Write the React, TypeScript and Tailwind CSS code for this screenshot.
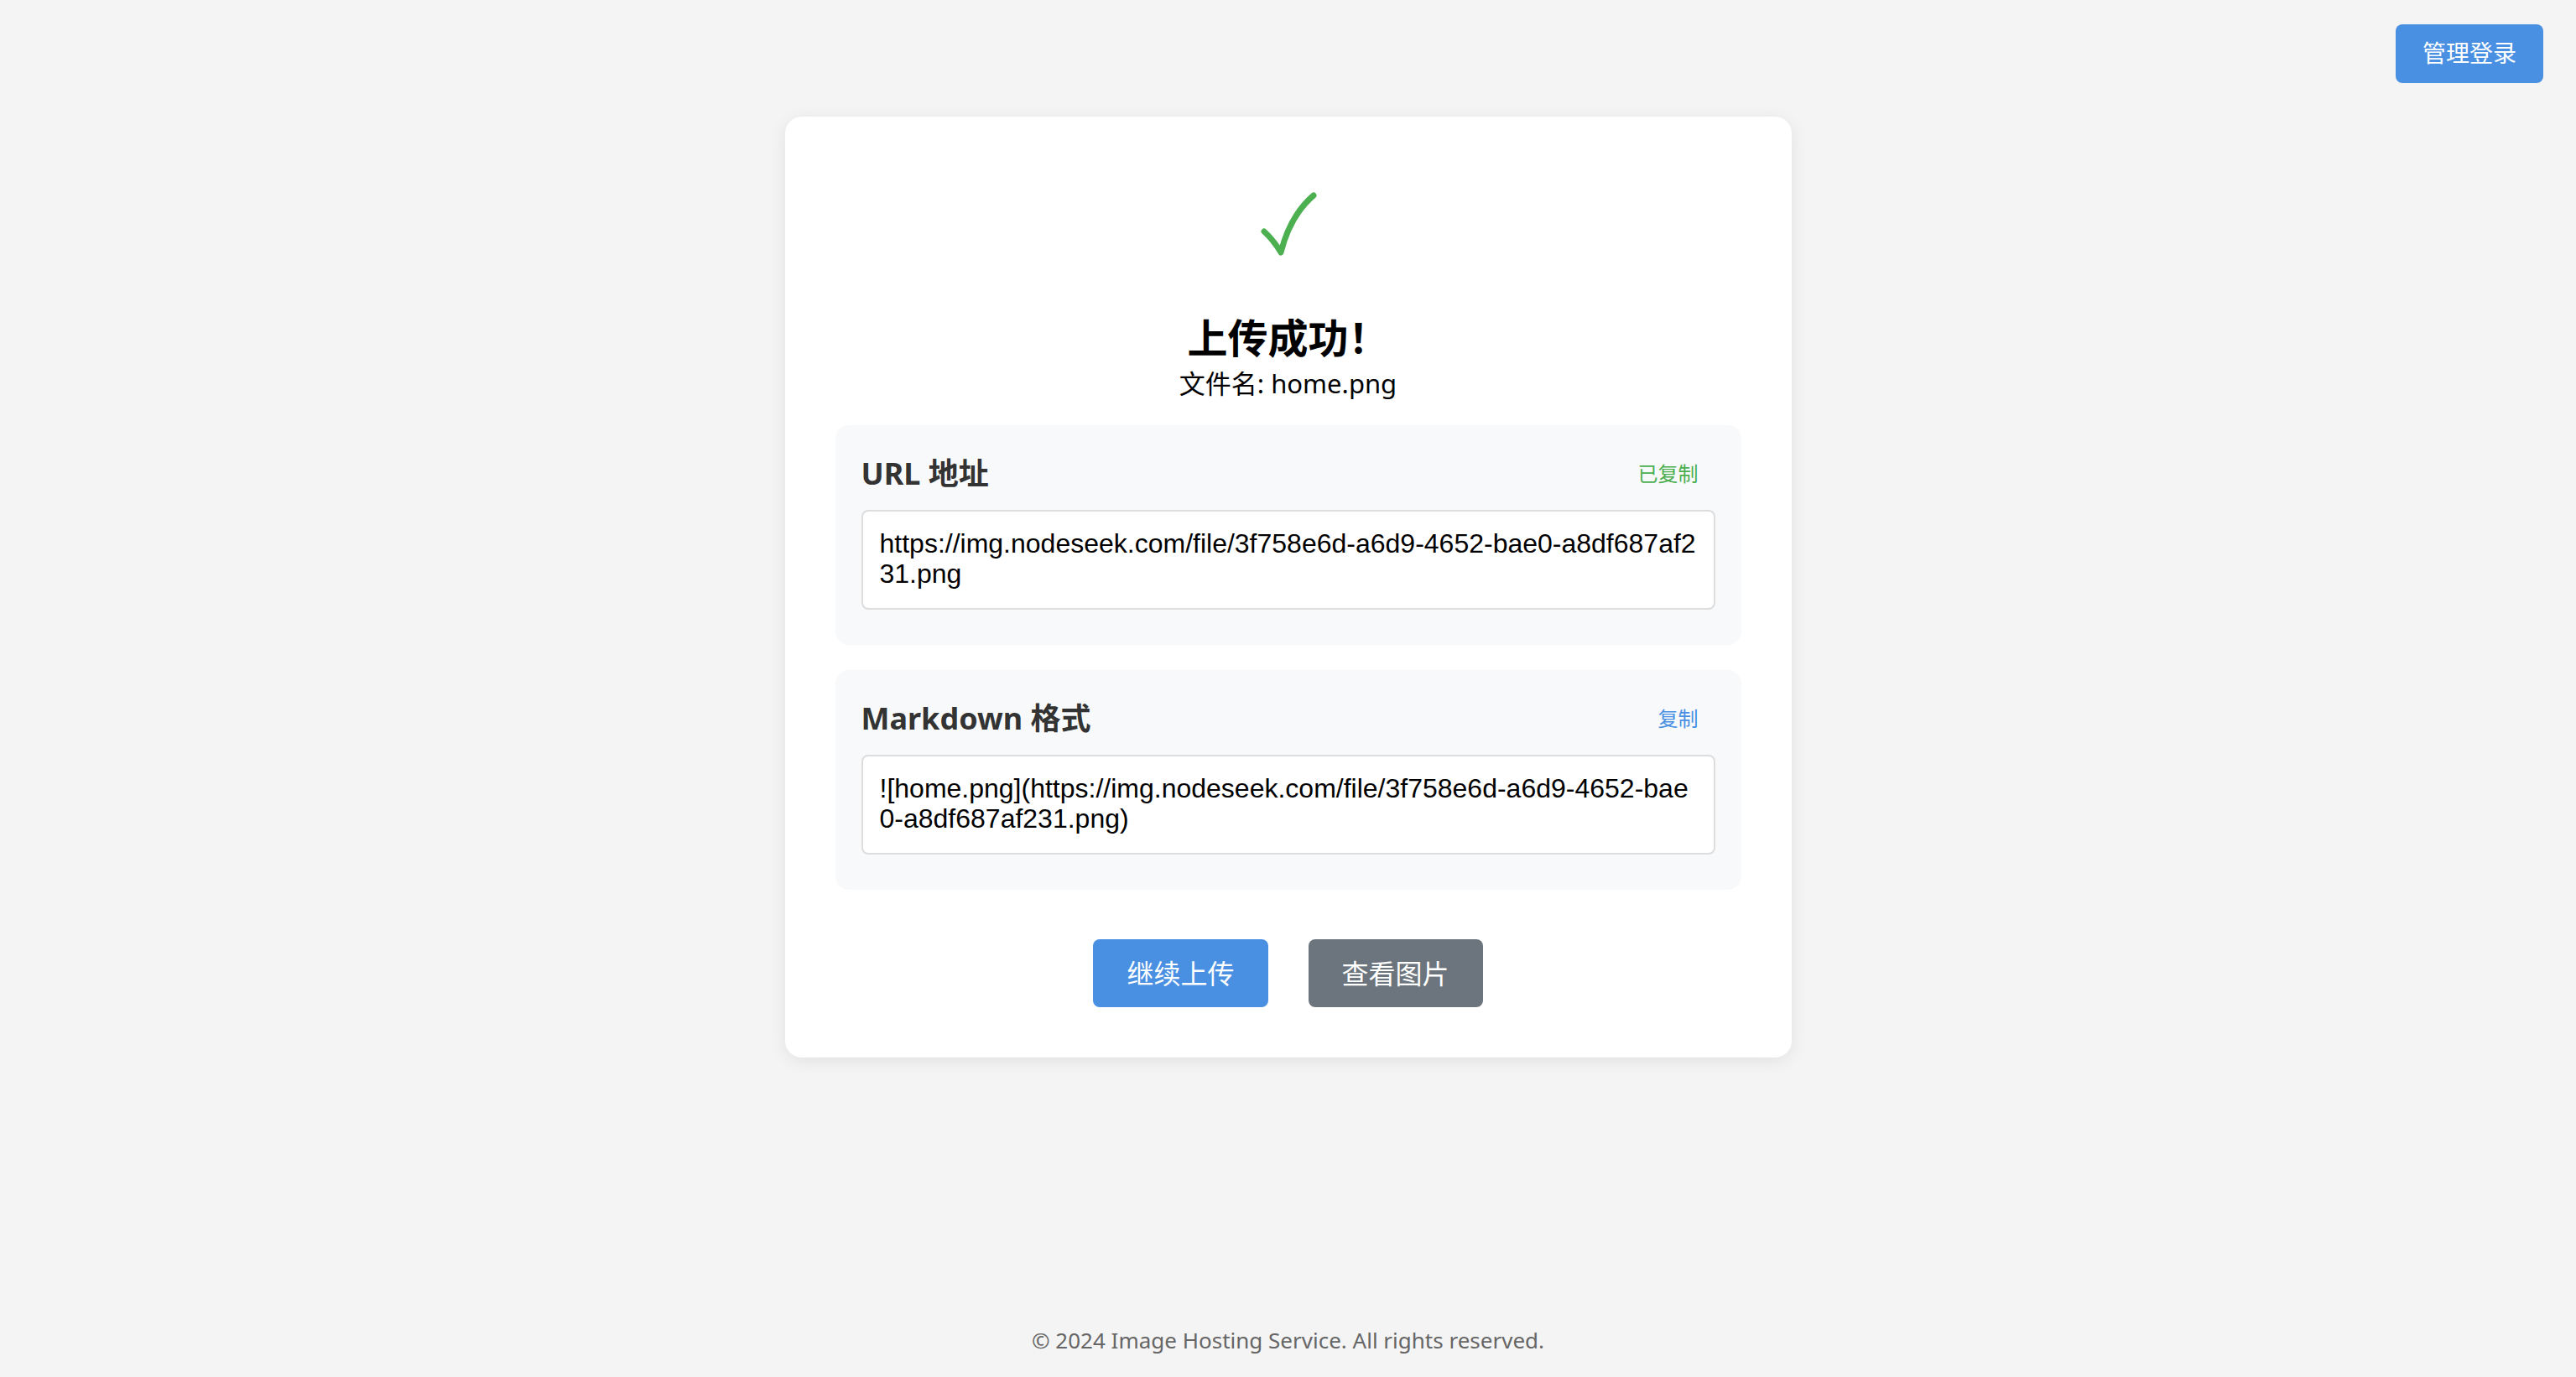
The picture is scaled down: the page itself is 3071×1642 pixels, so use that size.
import { useState } from 'react';

const fileName = 'home.png';
const fileUrl = 'https://img.nodeseek.com/file/3f758e6d-a6d9-4652-bae0-a8df687af231.png';

const CheckMark = () => (
  <svg width="72" height="80" viewBox="0 0 72 80" fill="none" className="block">
    <path
      d="M7 49 Q18 59 27 74 Q38 30 66 6"
      stroke="#4caf50"
      strokeWidth="7"
      strokeLinecap="round"
      strokeLinejoin="round"
    />
  </svg>
);

const LinkBox = ({
  label,
  value,
  copied,
  onCopy,
}: {
  label: string;
  value: string;
  copied: boolean;
  onCopy: () => void;
}) => (
  <div className="w-full bg-[#f8f9fa] rounded-[16px] px-[31px] pt-[30px] pb-[42px]">
    <div className="flex h-[56px] items-center justify-between">
      <h3 className="text-[36px] font-bold text-[#333]">{label}</h3>
      <button
        onClick={onCopy}
        className={`px-[20px] text-[24px] ${copied ? 'text-[#4caf50]' : 'text-[#4a90e2]'}`}
      >
        {copied ? '已复制' : '复制'}
      </button>
    </div>
    <textarea
      readOnly
      rows={2}
      value={value}
      className="mt-[15px] block h-[119px] w-full resize-none overflow-hidden rounded-[8px] border-2 border-[#ddd] bg-white p-[20px] text-[32px] leading-[1.15] text-black break-all outline-none font-['Liberation_Sans',Arial,sans-serif]"
    />
  </div>
);

export default function App() {
  const [copied, setCopied] = useState<'url' | 'md' | null>('url');

  return (
    <div className="flex min-h-screen flex-col bg-[#f4f4f4] font-['Noto_Sans','Noto_Sans_CJK_SC',sans-serif]">
      <header className="flex justify-end pt-[29px] pr-[39px]">
        <button className="rounded-[8px] bg-[#4a90e2] px-[32px] py-[16px] text-[28px] leading-[1.35] text-white">
          管理登录
        </button>
      </header>

      <main className="flex flex-1 justify-center pt-[40px]">
        <div className="flex h-fit w-[1200px] flex-col items-center rounded-[20px] bg-white p-[60px] shadow-[0_4px_20px_rgba(0,0,0,0.08)]">
          <div className="mt-[28px]">
            <CheckMark />
          </div>
          <h2 className="mt-[67px] text-[48px] font-bold leading-[1.2] text-black">上传成功！</h2>
          <p className="mt-[8px] text-[31px] leading-[1.2] text-black">文件名: {fileName}</p>

          <div className="mt-[30px] flex w-full flex-col gap-[30px]">
            <LinkBox label="URL 地址" value={fileUrl} copied={copied === 'url'} onCopy={() => setCopied('url')} />
            <LinkBox
              label="Markdown 格式"
              value={`![${fileName}](${fileUrl})`}
              copied={copied === 'md'}
              onCopy={() => setCopied('md')}
            />
          </div>

          <div className="mt-[59px] flex gap-[48px]">
            <button className="rounded-[8px] bg-[#4a90e2] px-[40px] py-[20px] text-[32px] leading-[1.3] text-white">
              继续上传
            </button>
            <button className="rounded-[8px] bg-[#6c757d] px-[40px] py-[20px] text-[32px] leading-[1.3] text-white">
              查看图片
            </button>
          </div>
        </div>
      </main>

      <footer className="pb-[22px] pt-[20px] text-center text-[26px] leading-[1.6] text-[#666]">
        © 2024 Image Hosting Service. All rights reserved.
      </footer>
    </div>
  );
}
